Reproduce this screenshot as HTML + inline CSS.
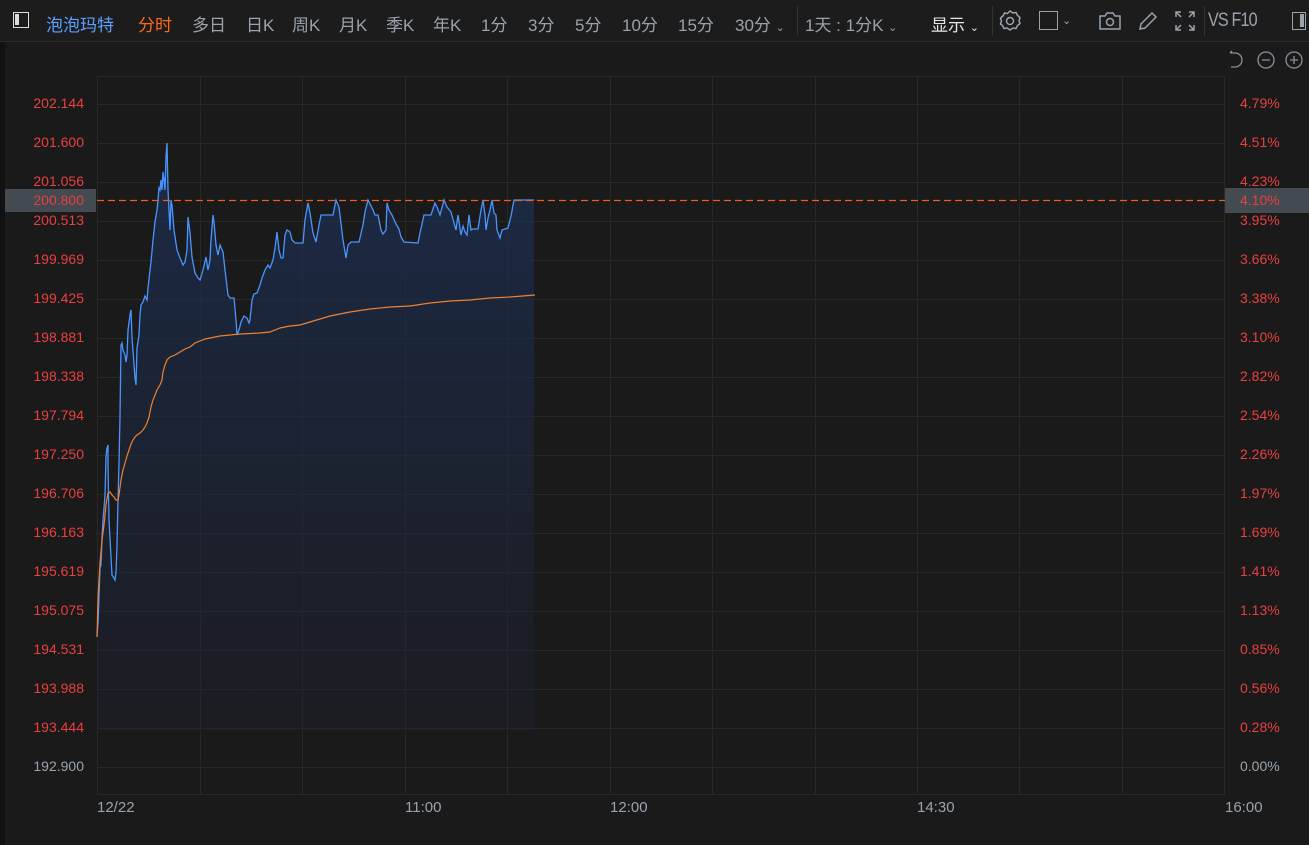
<!DOCTYPE html>
<html><head><meta charset="utf-8"><style>
body{margin:0;width:1309px;height:845px;background:#1a1a1a;overflow:hidden;font-family:"Liberation Sans","Noto Sans CJK SC",sans-serif}
.tb{position:absolute;left:0;top:0;width:1309px;height:41px;background:#1c1c1c;border-bottom:1px solid #2a2a2a}
.t{position:absolute;top:11px;font-size:17px;color:#9aa3ad;white-space:nowrap}
.l{position:absolute;font-size:14px;color:#e8403e;text-align:right;width:84px;left:0}
.r{position:absolute;font-size:14px;color:#e8403e;left:1240px}
.x{position:absolute;top:799px;font-size:15px;color:#9aa3ad}
</style></head><body>
<div style="position:absolute;left:0;top:0;width:5px;height:845px;background:#111"></div>
<div class="tb"></div>
<div style="position:absolute;left:13px;top:12px;width:16px;height:16px;border:1.5px solid #ddd;box-sizing:border-box"><div style="position:absolute;left:1px;top:1px;width:4px;height:11px;background:#ddd"></div></div>
<div class="t" style="left:46px;color:#5aa0ff">泡泡玛特</div>
<div class="t" style="left:138px;color:#ff6a1a">分时</div>
<div class="t" style="left:192px">多日</div>
<div class="t" style="left:246px">日K</div>
<div class="t" style="left:292px">周K</div>
<div class="t" style="left:339px">月K</div>
<div class="t" style="left:386px">季K</div>
<div class="t" style="left:433px">年K</div>
<div class="t" style="left:481px">1分</div>
<div class="t" style="left:528px">3分</div>
<div class="t" style="left:575px">5分</div>
<div class="t" style="left:622px">10分</div>
<div class="t" style="left:678px">15分</div>
<div class="t" style="left:735px">30分 <span style="font-size:11px">⌄</span></div>
<div style="position:absolute;left:797px;top:6px;width:1px;height:30px;background:#333"></div>
<div class="t" style="left:805px">1天 : 1分K <span style="font-size:11px">⌄</span></div>
<div class="t" style="left:931px;color:#e6e6e6">显示 <span style="font-size:11px">⌄</span></div>
<div style="position:absolute;left:992px;top:6px;width:1px;height:30px;background:#333"></div>
<svg style="position:absolute;left:998px;top:9px" width="24" height="24" viewBox="0 0 24 24" fill="none" stroke="#9aa3ad" stroke-width="1.5"><path d="M12 2l3 2 3-.5 1.5 3 2.5 2-1 3 1 3-2.5 2-1.5 3-3-.5-3 2-3-2-3 .5-1.5-3L2.5 15l1-3-1-3L5 7l1.5-3 3 .5z"/><circle cx="12" cy="12" r="3.5"/></svg>
<div style="position:absolute;left:1039px;top:11px;width:19px;height:19px;border:1.5px solid #9aa3ad;box-sizing:border-box"></div>
<div class="t" style="left:1062px;font-size:11px;top:14px">⌄</div>
<svg style="position:absolute;left:1098px;top:10px" width="24" height="22" viewBox="0 0 24 22" fill="none" stroke="#9aa3ad" stroke-width="1.5"><path d="M2 6h5l2-3h6l2 3h5v13H2z"/><circle cx="12" cy="12" r="3.5"/></svg>
<svg style="position:absolute;left:1137px;top:10px" width="22" height="22" viewBox="0 0 22 22" fill="none" stroke="#9aa3ad" stroke-width="1.5"><path d="M15 3l4 4L8 18l-5 1 1-5z"/></svg>
<svg style="position:absolute;left:1174px;top:10px" width="22" height="22" viewBox="0 0 22 22" fill="none" stroke="#9aa3ad" stroke-width="1.5"><path d="M2 7V2h5M2 2l5 5M20 7V2h-5M20 2l-5 5M2 15v5h5M2 20l5-5M20 15v5h-5M20 20l-5-5"/></svg>
<div style="position:absolute;left:1204px;top:6px;width:1px;height:30px;background:#333"></div>
<div class="t" style="left:1208px;font-size:19px;top:10px;letter-spacing:-1px;transform:scaleX(0.85);transform-origin:left">VS F10</div>
<div style="position:absolute;left:1292px;top:12px;width:14px;height:18px;border:1.5px solid #9aa3ad;box-sizing:border-box"><div style="position:absolute;right:1px;top:1px;width:4px;height:13px;background:#9aa3ad"></div></div>
<svg style="position:absolute;left:1226px;top:49px" width="83" height="22" viewBox="0 0 83 22" fill="none" stroke="#8a9099" stroke-width="1.3"><path d="M4 4h5a7 7 0 010 14H5M4 4l2-2"/><circle cx="40" cy="11" r="8"/><path d="M36 11h8"/><circle cx="68" cy="11" r="8"/><path d="M64 11h8M68 7v8"/></svg>
<svg style="position:absolute;left:0;top:0" width="1309" height="845">
<defs><linearGradient id="g" x1="0" y1="0" x2="0" y2="1"><stop offset="0" stop-color="#1b2e50" stop-opacity="0.85"/><stop offset="1" stop-color="#1c2232" stop-opacity="0.35"/></linearGradient></defs>
<g stroke="#282828" stroke-width="1">
<path d="M97.5 76v718M200.5 76v718M302.5 76v718M405.5 76v718M507.5 76v718M610.5 76v718M712.5 76v718M815.5 76v718M917.5 76v718M1019.5 76v718M1122.5 76v718M1224.5 76v718"/>
<path d="M97 76.5h1128M97 104.5h1128M97 143.5h1128M97 182.5h1128M97 221.5h1128M97 260.5h1128M97 299.5h1128M97 338.5h1128M97 377.5h1128M97 416.5h1128M97 455.5h1128M97 494.5h1128M97 533.5h1128M97 572.5h1128M97 611.5h1128M97 650.5h1128M97 689.5h1128M97 728.5h1128M97 767.5h1128M97 794.5h1128"/>
</g>
<polygon fill="url(#g)" points="97,730 97,637 98,623 99,597 100,568 101,565 102,538 103,520 104,508 105,495 106,457 107,448 108,445 108,465 109,520 111,557 112,575 114,578 115,580 116,572 117,545 118,500 119,463 120,416 121,345 122,343 123,350 125,355 126,362 127,355 128,330 130,315 131,310 132,337 135,378 136,385 137,348 139,335 140,315 141,305 143,302 145,296 147,300 148,288 150,270 151,262 153,240 155,222 157,210 158,200 159,188 160,190 161,180 162,190 163,172 164,180 165,190 166,157 167,143 168,190 170,230 171,200 172,205 174,230 177,250 180,258 183,265 185,262 187,250 188,217 190,233 192,257 195,273 198,278 200,280 203,270 206,257 208,270 210,260 211,240 213,215 214,222 216,245 218,255 220,245 223,252 225,270 228,295 230,298 234,298 236,320 237,335 239,330 241,322 244,316 247,318 249,323 250,320 252,300 254,294 257,293 260,285 262,278 265,270 268,265 270,268 273,260 275,248 277,232 279,250 281,258 283,258 285,235 287,230 290,232 292,240 295,243 303,243 305,220 308,203 310,213 313,233 316,242 319,225 321,215 333,215 336,200 339,207 343,240 346,258 348,245 351,242 359,242 363,225 365,212 368,200 373,210 375,215 378,215 381,230 383,234 386,230 387,203 389,210 392,215 396,224 399,229 401,237 404,242 418,243 420,233 424,215 431,215 435,203 437,207 440,215 444,200 447,207 451,212 454,223 456,230 458,215 461,235 463,226 465,232 467,235 469,215 471,230 473,229 478,229 481,210 483,200 485,215 486,230 488,218 490,210 492,200 494,213 496,215 497,230 500,238 502,230 508,228 511,216 514,200 534,200 534,730"/>
<polyline fill="none" stroke="#4a94ff" stroke-width="1.3" points="97,637 98,623 99,597 100,568 101,565 102,538 103,520 104,508 105,495 106,457 107,448 108,445 108,465 109,520 111,557 112,575 114,578 115,580 116,572 117,545 118,500 119,463 120,416 121,345 122,343 123,350 125,355 126,362 127,355 128,330 130,315 131,310 132,337 135,378 136,385 137,348 139,335 140,315 141,305 143,302 145,296 147,300 148,288 150,270 151,262 153,240 155,222 157,210 158,200 159,188 160,190 161,180 162,190 163,172 164,180 165,190 166,157 167,143 168,190 170,230 171,200 172,205 174,230 177,250 180,258 183,265 185,262 187,250 188,217 190,233 192,257 195,273 198,278 200,280 203,270 206,257 208,270 210,260 211,240 213,215 214,222 216,245 218,255 220,245 223,252 225,270 228,295 230,298 234,298 236,320 237,335 239,330 241,322 244,316 247,318 249,323 250,320 252,300 254,294 257,293 260,285 262,278 265,270 268,265 270,268 273,260 275,248 277,232 279,250 281,258 283,258 285,235 287,230 290,232 292,240 295,243 303,243 305,220 308,203 310,213 313,233 316,242 319,225 321,215 333,215 336,200 339,207 343,240 346,258 348,245 351,242 359,242 363,225 365,212 368,200 373,210 375,215 378,215 381,230 383,234 386,230 387,203 389,210 392,215 396,224 399,229 401,237 404,242 418,243 420,233 424,215 431,215 435,203 437,207 440,215 444,200 447,207 451,212 454,223 456,230 458,215 461,235 463,226 465,232 467,235 469,215 471,230 473,229 478,229 481,210 483,200 485,215 486,230 488,218 490,210 492,200 494,213 496,215 497,230 500,238 502,230 508,228 511,216 514,200 534,200"/>
<polyline fill="none" stroke="#f08030" stroke-width="1.2" points="97,637 98,597 100,563 102,540 104,525 106,505 108,493 110,492 112,495 114,497 116,500 118,500 119,495 121,480 123,470 125,463 127,456 129,450 131,444 133,440 135,437 137,435 140,433 143,430 145,427 147,423 149,417 151,407 153,400 155,395 157,390 160,385 162,380 163,372 165,365 167,360 170,357 175,355 180,352 185,349 190,347 195,343 200,341 205,339 210,338 220,336 230,335 240,334 260,333 270,332 280,328 290,326 300,325 310,322 320,319 330,316 340,314 350,312 370,309 390,307 410,306 430,303 450,301 470,300 490,298 510,297 535,295"/>
<path d="M97 200.5H1225" stroke="#e8601a" stroke-width="1.2" stroke-dasharray="7 4"/>
</svg>
<div style="position:absolute;left:5px;top:189px;width:91px;height:23px;background:#434a52"></div>
<div style="position:absolute;left:1225px;top:188px;width:84px;height:25px;background:#434a52"></div>
<div class="l" style="top:95px">202.144</div>
<div class="l" style="top:134px">201.600</div>
<div class="l" style="top:173px">201.056</div>
<div class="l" style="top:192px">200.800</div>
<div class="l" style="top:212px">200.513</div>
<div class="l" style="top:251px">199.969</div>
<div class="l" style="top:290px">199.425</div>
<div class="l" style="top:329px">198.881</div>
<div class="l" style="top:368px">198.338</div>
<div class="l" style="top:407px">197.794</div>
<div class="l" style="top:446px">197.250</div>
<div class="l" style="top:485px">196.706</div>
<div class="l" style="top:524px">196.163</div>
<div class="l" style="top:563px">195.619</div>
<div class="l" style="top:602px">195.075</div>
<div class="l" style="top:641px">194.531</div>
<div class="l" style="top:680px">193.988</div>
<div class="l" style="top:719px">193.444</div>
<div class="l" style="top:758px;color:#9aa3ad">192.900</div>
<div class="r" style="top:95px">4.79%</div>
<div class="r" style="top:134px">4.51%</div>
<div class="r" style="top:173px">4.23%</div>
<div class="r" style="top:192px">4.10%</div>
<div class="r" style="top:212px">3.95%</div>
<div class="r" style="top:251px">3.66%</div>
<div class="r" style="top:290px">3.38%</div>
<div class="r" style="top:329px">3.10%</div>
<div class="r" style="top:368px">2.82%</div>
<div class="r" style="top:407px">2.54%</div>
<div class="r" style="top:446px">2.26%</div>
<div class="r" style="top:485px">1.97%</div>
<div class="r" style="top:524px">1.69%</div>
<div class="r" style="top:563px">1.41%</div>
<div class="r" style="top:602px">1.13%</div>
<div class="r" style="top:641px">0.85%</div>
<div class="r" style="top:680px">0.56%</div>
<div class="r" style="top:719px">0.28%</div>
<div class="r" style="top:758px;color:#9aa3ad">0.00%</div>
<div class="x" style="left:97px">12/22</div>
<div class="x" style="left:405px">11:00</div>
<div class="x" style="left:610px">12:00</div>
<div class="x" style="left:917px">14:30</div>
<div class="x" style="left:1225px">16:00</div>
</body></html>
